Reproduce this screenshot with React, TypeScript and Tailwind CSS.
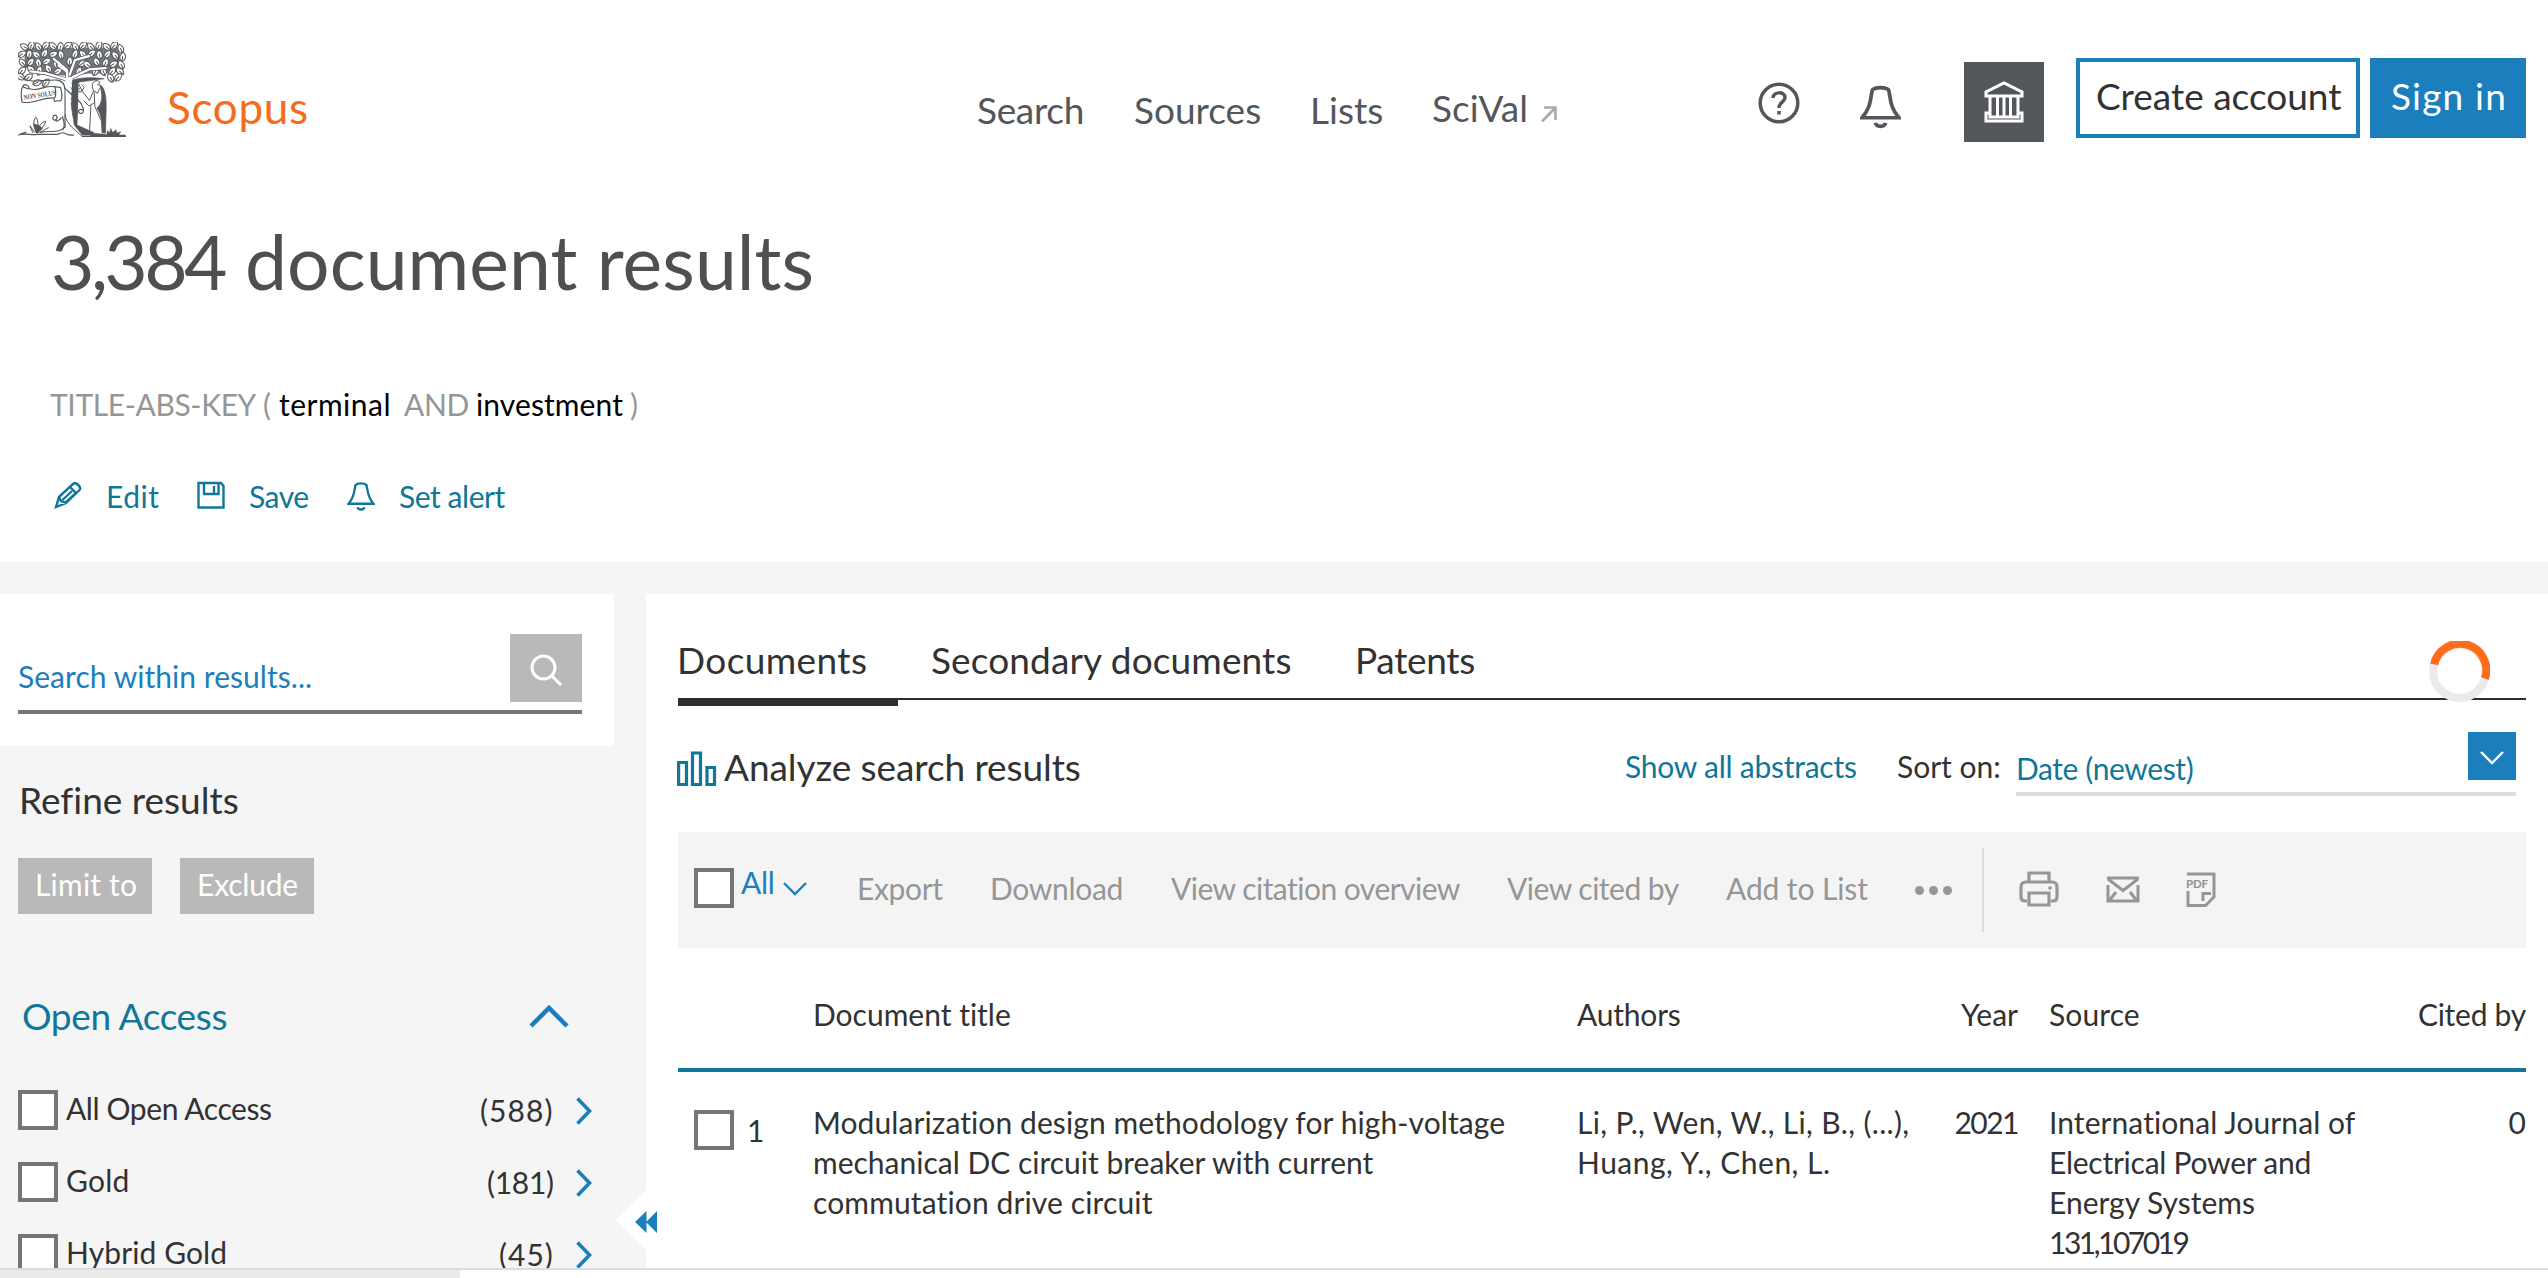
import type { ReactNode } from "react";

function T({ className = "", children }: { className?: string; children: ReactNode }) {
  return <div className={`shrink-0 whitespace-pre ${className}`}>{children}</div>;
}

/* Leaves of the tree's crown: x, y, rotation. */
const LEAVES: [number, number, number][] = [
  [32, 26, -60], [52, 22, 20], [74, 26, -35], [96, 22, 40], [118, 24, -50], [140, 26, 10], [162, 22, 50],
  [186, 26, -30], [208, 22, 40], [232, 26, -40], [256, 22, 20], [280, 26, -50], [302, 22, 40], [322, 32, -20],
  [24, 48, 60], [46, 48, 10], [68, 50, -50], [92, 46, 30], [118, 48, 70], [142, 50, -10], [184, 48, 20],
  [208, 48, -40], [234, 46, 50], [258, 50, -10], [282, 48, 40], [306, 52, -40], [328, 56, 10],
  [26, 74, -40], [50, 72, 40], [74, 74, -10], [98, 70, 60], [128, 76, 0], [168, 70, 10], [206, 76, 50],
  [250, 72, -30], [276, 74, 20], [300, 78, 60], [324, 80, -30],
  [24, 98, 40], [52, 94, -50], [76, 98, 20], [104, 92, -30], [132, 100, 60], [196, 100, 20], [222, 80, -50],
  [246, 100, 30], [270, 100, -20], [296, 100, 40], [320, 100, -50],
  [20, 116, -60], [44, 118, 50], [292, 120, -30], [314, 118, 40], [70, 134, 70], [96, 134, 40],
];

function ElsevierTree() {
  return (
    <svg viewBox="12 12 326 288" className="h-[96px] w-[108px]" fill="none" stroke="#53565a" strokeWidth="3.5" strokeLinecap="round" strokeLinejoin="round">
      <path d="M34 28h280l8 30-8 42-30 6-60 0-50 8-60-4-50-14-34-8z" fill="#53565a" stroke="none" opacity="0.8" />
      {LEAVES.map(([x, y, r]) => (
        <path key={`${x}-${y}`} transform={`translate(${x} ${y}) rotate(${r})`} d="M0-15C11-7 12 7 0 14C-12 7-11-7 0-15ZM0-2V10" fill="#fff" strokeWidth="3" />
      ))}
      <path d="M160 130V96L120 62M160 100L134 82M168 110L184 66L226 54M158 124L96 106L50 100M176 118L226 94L276 90" stroke="#53565a" strokeWidth="11" />
      <path d="M160 130V96L120 62M160 100L134 82M168 110L184 66L226 54M158 124L96 106L50 100M176 118L226 94L276 90" stroke="#fff" strokeWidth="7" />
      <path d="M36 124C60 136 90 124 130 126C146 128 154 138 154 158V268" />
      <path d="M172 128C200 116 240 118 272 122L196 132L190 262L240 284L236 292H206L182 262L172 200Z" fill="#53565a" strokeWidth="2" />
      <path d="M154 120L176 116L172 206L178 262L206 296L160 272L156 160Z" fill="#fff" stroke="none" />
      <path d="M154 232C160 262 184 276 206 296M174 136l10 8M172 150l12 6M172 166l12 4M172 182l12 4M172 198l12 4M174 214l12 4M176 230l10 4" strokeWidth="3" />
      <path d="M194 136H250V278L194 260Z" fill="#fff" stroke="none" />
      <path d="M152 148C170 172 204 186 206 206M206 206C214 216 210 230 198 226M198 226C190 220 198 212 206 216" />
      <path d="M26 146C20 156 22 180 24 192C50 202 92 176 120 180L122 190L142 188C146 176 144 160 140 148L122 146C90 140 70 168 26 146ZM26 146C30 134 48 142 44 152M122 180C128 176 126 150 122 146" fill="#fff" />
      <text x="30" y="186" transform="rotate(-9 30 186)" fill="#53565a" stroke="none" fontFamily="Liberation Serif" fontWeight="700" fontSize="22" textLength="98" lengthAdjust="spacingAndGlyphs">NON SOLUS</text>
      <path d="M248 128C232 130 236 150 240 158L228 188L206 160L196 140M196 140l-8 6 10 6-8 8 12 2 10-14-8-8M212 190L226 204L240 196M232 204L228 282M252 140C262 136 262 128 248 128M240 158l12 8 6-14M242 164L244 206L264 250L266 282" strokeWidth="3" />
      <path d="M258 140C274 144 280 178 278 220L276 286H266C268 250 262 230 250 210C266 200 270 170 258 140Z" fill="#53565a" strokeWidth="2" />
      <path d="M118 236C124 226 134 236 128 244C122 254 136 250 142 240M118 236C114 246 122 250 128 244M146 236C150 250 156 260 148 276" />
      <path d="M12 292C40 284 50 294 70 290H130C160 276 150 296 180 292M80 284C110 276 130 290 154 268M206 296H336M20 288l16-4" />
      <path d="M68 284C56 262 58 248 66 238C76 252 72 268 68 284ZM70 284C76 262 84 252 96 250C92 264 82 276 70 284ZM62 284L48 264L56 284M78 284L104 270" fill="#fff" strokeWidth="3" />
      <path d="M66 284L58 258L74 262L86 272L72 286ZM280 290l2-12 6 8 4-14 6 12 10-8 2 10 12-4-6 10 20 0v4H230l4-10z" fill="#53565a" strokeWidth="1.5" />
    </svg>
  );
}

function Box() {
  return <div className="size-10 shrink-0 border-4 border-[#757575] bg-white" />;
}

function Bell({ className, sw }: { className: string; sw: number }) {
  return (
    <svg viewBox="0 0 40 42" className={className} fill="none" stroke="currentColor" strokeWidth={sw}>
      <path d="M12 4.5C15 1.2 25 1.2 28 4.5C30 13 29 21 38 31.500H2C11 21 10 13 12 4.500Z" />
      <path d="M15 36.500C16 41 24 41 25 36.500" />
    </svg>
  );
}

function Header() {
  return (
    <header className="flex h-[220px] items-start">
      <div className="ml-[18px] mt-[42px]"><ElsevierTree /></div>
      <T className="ml-[41px] mt-[83px] w-[140px] text-[44px] leading-[48px] tracking-[0.7px] text-[#f36d21]">Scopus</T>
      <nav className="ml-[670px] flex items-start pt-[90px] text-[37px] leading-10 text-[#53565a]">
        <T className="w-[107px] tracking-[-0.32px]">Search</T>
        <T className="ml-[50px] w-[128px]">Sources</T>
        <T className="ml-[48px] w-[74px]">Lists</T>
        <T className="-mt-0.5 ml-[48px] w-[96px]">SciVal</T>
        <svg viewBox="0 0 16 16" className="ml-[13px] mt-4 size-4 text-[#aaa]" fill="none" stroke="currentColor" strokeWidth="2.600"><path d="M3 1.500H14.500V14M14.500 1.500L1 15.500" /></svg>
      </nav>
      <svg viewBox="0 0 42 42" className="ml-[201px] mt-[82px] size-[42px] text-[#53565a]" fill="none" stroke="currentColor" strokeWidth="3.500">
        <circle cx="21" cy="21" r="18.800" />
        <path d="M15 16C15 9.500 27 9 27 15.500C27 20 21 20 21 26M21 29V32.500" />
      </svg>
      <Bell className="ml-[60px] mt-[85px] h-[44px] w-[41px] text-[#53565a]" sw={3.6} />
      <div className="ml-[63px] mt-[62px] flex size-20 items-center justify-center bg-[#53565a]">
        <svg viewBox="0 0 40 42" className="h-[42px] w-10" fill="none" stroke="#fff" strokeWidth="3">
          <path d="M2 15V11L20 2L38 11V15ZM6 15V33M13.500 15V36M20 15V36M26.500 15V36M34 15V33M2 40V32H6V36H34V32H38V40Z" />
        </svg>
      </div>
      <div className="ml-8 mt-[58px] flex h-20 w-[284px] border-4 border-[#1b7fbd] pl-4 text-[37px] leading-[72px] text-[#323232]">
        <T className="-mt-0.5 w-[246px]">Create account</T>
      </div>
      <div className="ml-2.5 mt-[58px] flex h-20 w-[156px] bg-[#1b7fbd] pl-[21px] text-[37px] leading-[76px] text-white">
        <T className="w-[116px] tracking-[1.19px]">Sign in</T>
      </div>
    </header>
  );
}

function QueryBlock() {
  return (
    <section className="flex h-[342px] flex-col">
      <h1 className="ml-[51px] flex text-[75px] leading-[82px] text-[#4f4f4f]">
        <T className="w-[194px] tracking-[-3.6px]">3,384</T>
        <T className="tracking-[0.1px]">document results</T>
      </h1>
      <div className="ml-[50px] mt-[82px] flex text-[30px] leading-10 text-[#969696]">
        <T className="w-[206px] tracking-[-0.37px]">TITLE-ABS-KEY</T>
        <T className="ml-[7px] w-[12px]">(</T>
        <T className="ml-[4px] w-[112px] tracking-[0.49px] text-black">terminal</T>
        <T className="ml-[13px] w-[65px] tracking-[-0.34px]">AND</T>
        <T className="ml-[7px] w-[147px] tracking-[0.09px] text-black">investment</T>
        <T className="ml-[7px] w-[12px]">)</T>
      </div>
      <div className="mt-[52px] flex items-start text-[30px] leading-10 text-[#107799]">
        <svg viewBox="0 0 28 28" className="ml-[54px] mt-[5px] size-7" fill="none" stroke="currentColor" strokeWidth="2.400">
          <path d="M2 26L5 16L19 3C21 0 28 6 25.500 9L12 22L2 26ZM16 6L22 12M8.500 19L18 10M11 22L21 13M5 16L7 20L12 22" />
        </svg>
        <T className="ml-[24px] w-[54px] tracking-[0.5px]">Edit</T>
        <svg viewBox="0 0 28 28" className="ml-[37px] mt-[5px] size-7" fill="none" stroke="currentColor" strokeWidth="2.400">
          <path d="M1.500 2H24L26.500 5V26.500H1.500ZM7 2V13H21.500V2M17 5V12" />
        </svg>
        <T className="ml-[24px] w-[60px] tracking-[-0.5px]">Save</T>
        <Bell className="ml-[38px] mt-[6px] h-[29px] w-7" sw={3.4} />
        <T className="ml-[24px] w-[107px] tracking-[-0.45px]">Set alert</T>
      </div>
    </section>
  );
}

const FACETS = [
  { name: "All Open Access", nameClass: "tracking-[-0.4px]", count: "(588)", countClass: "w-[73px] tracking-[1.1px]" },
  { name: "Gold", nameClass: "tracking-[0.2px]", count: "(181)", countClass: "w-[66px] tracking-[-0.3px]" },
  { name: "Hybrid Gold", nameClass: "tracking-[0.1px]", count: "(45)", countClass: "w-[54px] tracking-[1px]" },
];

function Sidebar() {
  return (
    <aside className="flex w-[614px] shrink-0 flex-col">
      <div className="flex h-[152px] shrink-0 flex-col bg-white pl-[18px] pr-8">
        <div className="flex h-[120px] items-start justify-between border-b-4 border-[#757475]">
          <T className="mt-[62px] text-[30px] leading-10 tracking-[0.04px] text-[#1b7fbd]">Search within results...</T>
          <div className="mt-10 flex h-[68px] w-[72px] items-center justify-center bg-[#b9b9b9]">
            <svg viewBox="0 0 32 32" className="mt-1 size-8" fill="none" stroke="#fff" strokeWidth="3"><circle cx="13.500" cy="13.500" r="11.500" /><path d="M21.500 21.500L31 31" /></svg>
          </div>
        </div>
      </div>
      <T className="ml-[19px] mt-[34px] text-[37px] leading-10 text-[#323232]">Refine results</T>
      <div className="ml-[18px] mt-[38px] flex shrink-0 gap-[28px] text-[30px] leading-[52px] text-white">
        <div className="flex h-14 w-[134px] bg-[#b9b9b9] pl-[17px]"><T className="tracking-[0.2px]">Limit to</T></div>
        <div className="flex h-14 w-[134px] bg-[#b9b9b9] pl-[17px]"><T className="tracking-[-0.2px]">Exclude</T></div>
      </div>
      <div className="mt-[82px] flex h-[94px] shrink-0 items-start">
        <T className="ml-[22px] w-[205px] text-[37px] leading-10 tracking-[-0.38px] text-[#107799]">Open Access</T>
        <svg viewBox="0 0 40 24" className="ml-[302px] mt-2 h-6 w-10" fill="none" stroke="#1b7fbd" strokeWidth="4.500"><path d="M2 22L20 4L38 22" /></svg>
      </div>
      {FACETS.map((f) => (
        <div key={f.name} className="flex h-[72px] shrink-0 items-start pl-[18px] text-[30px] leading-9 text-[#323232]">
          <Box />
          <T className={`ml-2 ${f.nameClass}`}>{f.name}</T>
          <div className="flex-1" />
          <T className={`mt-0.5 ${f.countClass}`}>{f.count}</T>
          <svg viewBox="0 0 16 28" className="ml-[23px] mr-[22px] mt-[7px] h-7 w-4" fill="none" stroke="#1b7fbd" strokeWidth="3.600"><path d="M1.500 1.500L13.500 14L1.500 26.500" /></svg>
        </div>
      ))}
    </aside>
  );
}

function Tabs() {
  return (
    <div className="relative flex h-[106px] items-start border-b-2 border-[#2e2e2e] pt-[46px] text-[37px] leading-10 text-[#323232]">
      <T className="-ml-px w-[190px] tracking-[0.4px]">Documents</T>
      <T className="ml-[64px] w-[362px] tracking-[0.12px]">Secondary documents</T>
      <T className="ml-[62px] tracking-[-0.3px]">Patents</T>
      <div className="absolute left-0 top-[104px] h-2 w-[220px] bg-[#2e2e2e]" />
      <svg viewBox="0 0 60 60" className="absolute right-9 top-[47px] size-[61px]" fill="none" strokeWidth="8">
        <circle cx="30" cy="30" r="26" stroke="#eaeaea" />
        <path d="M5 23A26 26 0 1 1 55 37" stroke="#ff6c1d" />
      </svg>
    </div>
  );
}

function AnalyzeRow() {
  return (
    <div className="flex h-[132px] items-start pt-[47px]">
      <svg viewBox="0 0 40 36" className="-ml-px mt-1 h-9 w-10" fill="none" stroke="#107799" strokeWidth="3.200"><path d="M1.600 11.500H9.500V33.500H1.600ZM15.500 2H23.500V33.500H15.500ZM30 16.500H37.500V33.500H30Z" /></svg>
      <T className="ml-[7px] w-[358px] text-[37px] leading-10 tracking-[-0.08px] text-[#323232]">Analyze search results</T>
      <T className="ml-[543px] mt-px w-[232px] text-[30px] leading-[36px] tracking-[-0.24px] text-[#107799]">Show all abstracts</T>
      <T className="ml-[40px] mt-px w-[105px] text-[30px] leading-[36px] text-[#323232]">Sort on:</T>
      <div className="-mt-[15px] ml-[14px] flex h-16 w-[500px] shrink-0 items-start justify-between border-b-4 border-[#dcdcdc] text-[#107799]">
        <T className="mt-4 text-[30px] leading-10 tracking-[-0.4px]">Date (newest)</T>
        <div className="flex size-12 items-center justify-center bg-[#1b7fbd]">
          <svg viewBox="0 0 24 14" className="mt-1 h-3.5 w-6" fill="none" stroke="#fff" strokeWidth="2.400"><path d="M1 1L12 12L23 1" /></svg>
        </div>
      </div>
    </div>
  );
}

function Toolbar() {
  return (
    <div className="flex h-[116px] items-start bg-[#f4f4f4] pl-4 pt-9 text-[30px] leading-10 text-[#969696]">
      <Box />
      <T className="-mt-1.5 ml-[7px] w-[33px] tracking-[-0.3px] text-[#1b7fbd]">All</T>
      <svg viewBox="0 0 24 14" className="ml-[9px] mt-[14px] h-3.5 w-6" fill="none" stroke="#1b7fbd" strokeWidth="2.400"><path d="M1 1L12 12L23 1" /></svg>
      <T className="ml-[50px] w-[86px] tracking-[-0.35px]">Export</T>
      <T className="ml-[47px] w-[134px] tracking-[-0.3px]">Download</T>
      <T className="ml-[47px] w-[291px] tracking-[-0.53px]">View citation overview</T>
      <T className="ml-[45px] w-[173px] tracking-[-0.5px]">View cited by</T>
      <T className="ml-[46px] w-[143px] tracking-[-0.1px]">Add to List</T>
      <div className="ml-[46px] mt-[18px] flex gap-[5px]">
        <i className="size-[9px] rounded-full bg-[#969696]" />
        <i className="size-[9px] rounded-full bg-[#969696]" />
        <i className="size-[9px] rounded-full bg-[#969696]" />
      </div>
      <div className="-mt-5 ml-[30px] h-[84px] w-0.5 bg-[#dcdcdc]" />
      <svg viewBox="0 0 40 36" className="ml-[35px] mt-[3px] h-9 w-10" fill="none" stroke="currentColor" strokeWidth="3.200">
        <path d="M10 11V2H30V11M8 30H6Q2 30 2 26V16Q2 11 7 11H33Q38 11 38 16V26Q38 30 34 30H32M10 22H30V34H10Z" />
        <path d="M31 15.500V18.500" />
      </svg>
      <svg viewBox="0 0 34 28" className="ml-[47px] mt-[8px] h-7 w-[34px]" fill="none" stroke="currentColor" strokeWidth="3">
        <path d="M1 2H33M2 9V25H32V9M2 3L17 14.500L32 3M10 16L3 25M24 16L31 25" />
      </svg>
      <svg viewBox="0 0 30 36" className="ml-[46px] mt-[4px] h-9 w-[30px]" fill="none" stroke="currentColor" strokeWidth="3">
        <path d="M1 2H28V25L19.500 33.500H2V19M17 29V21.500H25" />
        <text x="0" y="15.500" fill="currentColor" stroke="none" fontFamily="Lato" fontWeight="900" fontSize="11.500" textLength="22">PDF</text>
      </svg>
    </div>
  );
}

const COLS = "grid grid-cols-[135px_764px_335px_107px_320px_187px] text-[30px] leading-10 text-[#323232]";

function Table() {
  return (
    <div>
      <div className={`${COLS} h-[124px] border-b-4 border-[#107799] pt-[46px]`}>
        <div />
        <T>Document title</T>
        <T className="tracking-[-0.2px]">Authors</T>
        <T className="mr-px justify-self-end">Year</T>
        <T className="ml-[30px] tracking-[0.1px]">Source</T>
        <T className="justify-self-end tracking-[-0.25px]">Cited by</T>
      </div>
      <div className={`${COLS} pt-[30px]`}>
        <div className="flex pl-4 pt-2"><Box /><T className="ml-[13px]">1</T></div>
        <div>
          <T className="tracking-[0.09px]">Modularization design methodology for high-voltage</T>
          <T>mechanical DC circuit breaker with current</T>
          <T className="tracking-[0.13px]">commutation drive circuit</T>
        </div>
        <div>
          <T className="tracking-[0.32px]">Li, P., Wen, W., Li, B., (...),</T>
          <T className="tracking-[0.5px]">Huang, Y., Chen, L.</T>
        </div>
        <T className="mr-px justify-self-end tracking-[-1.5px]">2021</T>
        <div className="pl-[30px]">
          <T className="tracking-[0.08px]">International Journal of</T>
          <T className="tracking-[-0.25px]">Electrical Power and</T>
          <T>Energy Systems</T>
          <T className="tracking-[-2.5px]">131,107019</T>
        </div>
        <T className="justify-self-end">0</T>
      </div>
    </div>
  );
}

export default function App() {
  return (
    <div className="h-[1278px] w-[2548px] overflow-hidden bg-white font-[Lato,sans-serif] [font-variant-ligatures:none]">
      <Header />
      <QueryBlock />
      <div className="flex h-[706px] overflow-hidden bg-[#f5f5f5] pt-8">
        <Sidebar />
        <main className="relative ml-8 flex w-[1902px] shrink-0 flex-col bg-white pl-8 pr-[22px]">
          <svg viewBox="0 0 42 60" className="absolute -left-[30px] top-[596px] h-[60px] w-[42px]">
            <path d="M30 0L0 30L30 60Z" fill="#fff" />
            <path d="M30.500 21V43L19 32ZM41 21V43L30 32Z" fill="#1b7fbd" />
          </svg>
          <Tabs />
          <AnalyzeRow />
          <Toolbar />
          <Table />
        </main>
      </div>
      <div className="h-2.5 border-t-2 border-[#dcdce0] bg-white"><div className="h-2 w-[460px] bg-[#ebebeb]" /></div>
    </div>
  );
}
